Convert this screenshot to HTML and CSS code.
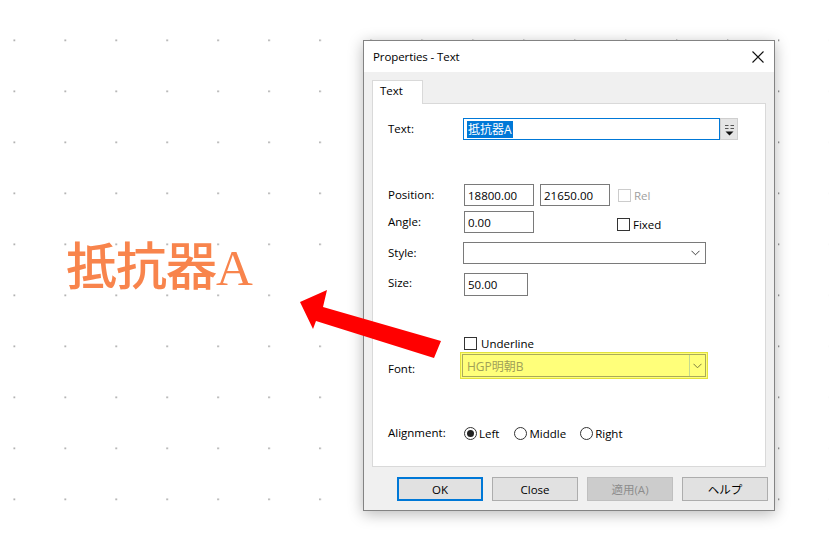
FILE: index.html
```html
<!DOCTYPE html>
<html lang="ja">
<head>
<meta charset="utf-8">
<title>Properties - Text</title>
<link rel="stylesheet" href="styles.css">
</head>
<body>
<div class="desk">
  <svg class="grid" width="829" height="543" viewBox="0 0 829 543" aria-hidden="true">
    <defs>
      <pattern id="dots" x="13.6" y="39.6" width="50.96" height="51" patternUnits="userSpaceOnUse">
        <rect x="0" y="0" width="1.3" height="1.3" fill="#6a6a6a"/>
      </pattern>
    </defs>
    <rect width="829" height="543" fill="url(#dots)"/>
  </svg>

  <div class="bigtext">抵抗器A</div>

  <div class="dialog">
    <div class="titlebar">
      <span class="title">Properties - Text</span>
      <svg class="close" width="12" height="12" viewBox="0 0 12 12"><path d="M0.5 0.5 L11.5 11.5 M11.5 0.5 L0.5 11.5" stroke="#111" stroke-width="1.1" fill="none"/></svg>
    </div>
    <div class="body">
      <div class="tabs"><div class="tab">Text</div></div>
      <div class="panel">
        <div class="row r-text">
          <span class="lbl">Text:</span>
          <div class="input wide focus"><span class="sel">抵抗器A</span></div>
          <div class="pick">
            <svg width="15" height="19" viewBox="0 0 15 19"><path d="M3 5.5h3.5M8.5 5.5h3.5M3 8.5h3.5M8.5 8.5h3.5" stroke="#555" stroke-width="1"/><path d="M3.5 11.5h8l-4 4z" fill="#111"/></svg>
          </div>
        </div>
        <div class="row r-pos">
          <span class="lbl">Position:</span>
          <div class="input w71">18800.00</div>
          <div class="input w70 ml6">21650.00</div>
          <label class="check disabled ml8"><span class="box"></span>Rel</label>
        </div>
        <div class="row r-angle">
          <span class="lbl">Angle:</span>
          <div class="input w71">0.00</div>
          <label class="check fixed"><span class="box"></span>Fixed</label>
        </div>
        <div class="row r-style">
          <span class="lbl">Style:</span>
          <div class="combo">
            <span class="ctext"></span>
            <svg class="chev" width="9" height="6" viewBox="0 0 9 6"><path d="M0.5 0.8 L4.5 4.8 L8.5 0.8" stroke="#444" stroke-width="1" fill="none"/></svg>
          </div>
        </div>
        <div class="row r-size">
          <span class="lbl">Size:</span>
          <div class="input w64">50.00</div>
        </div>
        <div class="row r-under">
          <span class="lbl"></span>
          <label class="check"><span class="box"></span>Underline</label>
        </div>
        <div class="row r-font">
          <span class="lbl">Font:</span>
          <div class="hl">
            <div class="fcombo">
              <span class="ftext">HGP明朝B</span>
              <span class="fbtn"><svg width="9" height="6" viewBox="0 0 9 6"><path d="M0.5 0.8 L4.5 4.8 L8.5 0.8" stroke="#7a7a40" stroke-width="1" fill="none"/></svg></span>
            </div>
          </div>
        </div>
        <div class="row r-align">
          <span class="lbl">Alignment:</span>
          <label class="radio on"><span class="dot"></span>Left</label>
          <label class="radio"><span class="dot"></span>Middle</label>
          <label class="radio"><span class="dot"></span>Right</label>
        </div>
      </div>
      <div class="buttons">
        <div class="btn default">OK</div>
        <div class="btn">Close</div>
        <div class="btn off">適用(A)</div>
        <div class="btn">ヘルプ</div>
      </div>
    </div>
  </div>

  <svg class="arrow" width="829" height="543" viewBox="0 0 829 543" aria-hidden="true">
    <polygon points="300,302 327,290 323,307 441,341 434,358 316,321 313,329" fill="#ff0000"/>
  </svg>
</div>
</body>
</html>
```
FILE: styles.css
```css
* { box-sizing: border-box; }
html, body { margin: 0; padding: 0; background: #fff; }
body {
  font-family: "Segoe UI", "Open Sans", "Noto Sans CJK JP", sans-serif;
  font-size: 11.5px;
  color: #000;
}
.desk {
  position: relative;
  width: 829px;
  height: 543px;
  overflow: hidden;
  background: #fff;
}
.grid { position: absolute; left: 0; top: 0; }
.bigtext {
  position: absolute;
  left: 66px;
  top: 236px;
  font-family: "Liberation Serif", "Noto Sans CJK JP", serif;
  font-size: 51px;
  line-height: 64px;
  color: #f8844c;
  font-weight: 500;
  letter-spacing: -1px;
}
.arrow { position: absolute; left: 0; top: 0; }

/* dialog window */
.dialog {
  position: absolute;
  left: 363px;
  top: 40px;
  width: 412px;
  height: 471px;
  border: 1px solid #838383;
  background: #f0f0f0;
  box-shadow: 0 3px 14px rgba(0, 0, 0, 0.28);
  display: flex;
  flex-direction: column;
}
.titlebar {
  height: 31px;
  background: #fff;
  display: flex;
  align-items: center;
  justify-content: space-between;
  padding: 0 10px 0 9px;
}
.title { font-size: 11.5px; letter-spacing: -0.1px; }
.close { display: block; }
.body {
  padding: 8px 0 0 8px;
  display: flex;
  flex-direction: column;
}
.tabs { display: flex; height: 23px; }
.tab {
  width: 51px;
  height: 24px;
  background: #fff;
  border: 1px solid #d9d9d9;
  border-bottom: none;
  padding: 2px 0 0 7px;
  position: relative;
  z-index: 1;
}
.panel {
  width: 394px;
  height: 364px;
  background: #fff;
  border: 1px solid #d9d9d9;
  padding: 0 0 0 15px;
  display: flex;
  flex-direction: column;
}
.row { display: flex; align-items: center; }
.lbl { width: 75px; flex: none; margin-bottom: 2px; }
.r-text { margin-top: 14px; height: 22px; }
.r-pos { margin-top: 44px; height: 22px; }
.r-angle { margin-top: 5px; height: 22px; }
.r-style { margin-top: 9px; height: 22px; }
.r-size { margin-top: 9px; height: 23px; }
.r-size .lbl { margin-bottom: 4px; }
.r-under { margin-top: 39px; height: 16px; }
.r-font { margin-top: 1px; height: 27px; }
.r-font .lbl { margin-bottom: 0; padding-top: 5px; }
.r-align { margin-top: 45px; height: 18px; }

.input {
  height: 22px;
  border: 1px solid #7a7a7a;
  background: #fff;
  padding: 0 0 0 3px;
  display: flex;
  align-items: center;
  white-space: nowrap;
}
.r-pos .input:first-of-type, .r-angle .input, .r-size .input { margin-left: 1px; }
.wide { width: 257px; }
.focus { border-color: #0078d7; padding-left: 3px; }
.sel {
  background: #0078d7;
  color: #fff;
  font-family: "Segoe UI", "Open Sans", "Noto Sans CJK JP", sans-serif;
  font-size: 12px;
  line-height: 17px;
  padding: 0 1px;
}
.pick {
  width: 18px;
  height: 22px;
  background: #e5e5e5;
  border: 1px solid #cfcfcf;
  display: flex;
  align-items: center;
  justify-content: center;
}
.w71 { width: 70px; }
.w70 { width: 70px; }
.w64 { width: 64px; height: 23px; }
.ml6 { margin-left: 6px; }
.ml8 { margin-left: 8px; }

.check { display: flex; align-items: center; gap: 3px; }
.check .box {
  width: 13px;
  height: 13px;
  border: 1px solid #333;
  background: #fff;
  display: block;
}
.check.disabled { color: #a0a0a0; }
.check.disabled .box { border-color: #cccccc; }
.check.fixed { margin-left: 83px; margin-top: 5px; }
.r-under .check { margin-left: 1px; gap: 4px; }

.combo {
  width: 243px;
  height: 22px;
  border: 1px solid #7a7a7a;
  background: #fff;
  display: flex;
  align-items: center;
  justify-content: space-between;
  padding: 0 5px 0 4px;
}
.chev { display: block; }

.hl {
  margin-left: -3px;
  width: 248px;
  height: 27px;
  background: #ffff7a;
  border: 1px solid #e2e23c;
  padding: 1px;
}
.fcombo {
  height: 23px;
  border: 1px solid #aaaa5c;
  display: flex;
  align-items: stretch;
}
.ftext {
  flex: 1;
  display: flex;
  align-items: center;
  padding-left: 4px;
  color: #a0a058;
  font-family: "Segoe UI", "Open Sans", "Noto Sans CJK JP", sans-serif;
  font-size: 12px;
}
.fbtn {
  width: 16px;
  border-left: 1px solid #c4da90;
  display: flex;
  align-items: center;
  justify-content: center;
}

.radio { display: flex; align-items: center; gap: 2px; margin-right: 14px; }
.r-align .radio:first-of-type { margin-left: 1px; margin-right: 15px; }
.radio .dot {
  width: 13px;
  height: 13px;
  border: 1px solid #333;
  border-radius: 50%;
  background: #fff;
  display: flex;
  align-items: center;
  justify-content: center;
}
.radio.on .dot::after {
  content: "";
  width: 7px;
  height: 7px;
  border-radius: 50%;
  background: #222;
}

.buttons {
  display: flex;
  gap: 9px;
  margin: 10px 0 0 25px;
}
.btn {
  width: 86px;
  height: 24px;
  background: #e1e1e1;
  border: 1px solid #adadad;
  display: flex;
  align-items: center;
  justify-content: center;
  font-family: "Segoe UI", "Open Sans", "Noto Sans CJK JP", sans-serif;
  font-size: 11.5px;
}
.btn.default { border-color: #0078d7; box-shadow: inset 0 0 0 1px #0078d7; }
.btn.off { background: #cccccc; border-color: #bfbfbf; color: #8c8c8c; }
```
